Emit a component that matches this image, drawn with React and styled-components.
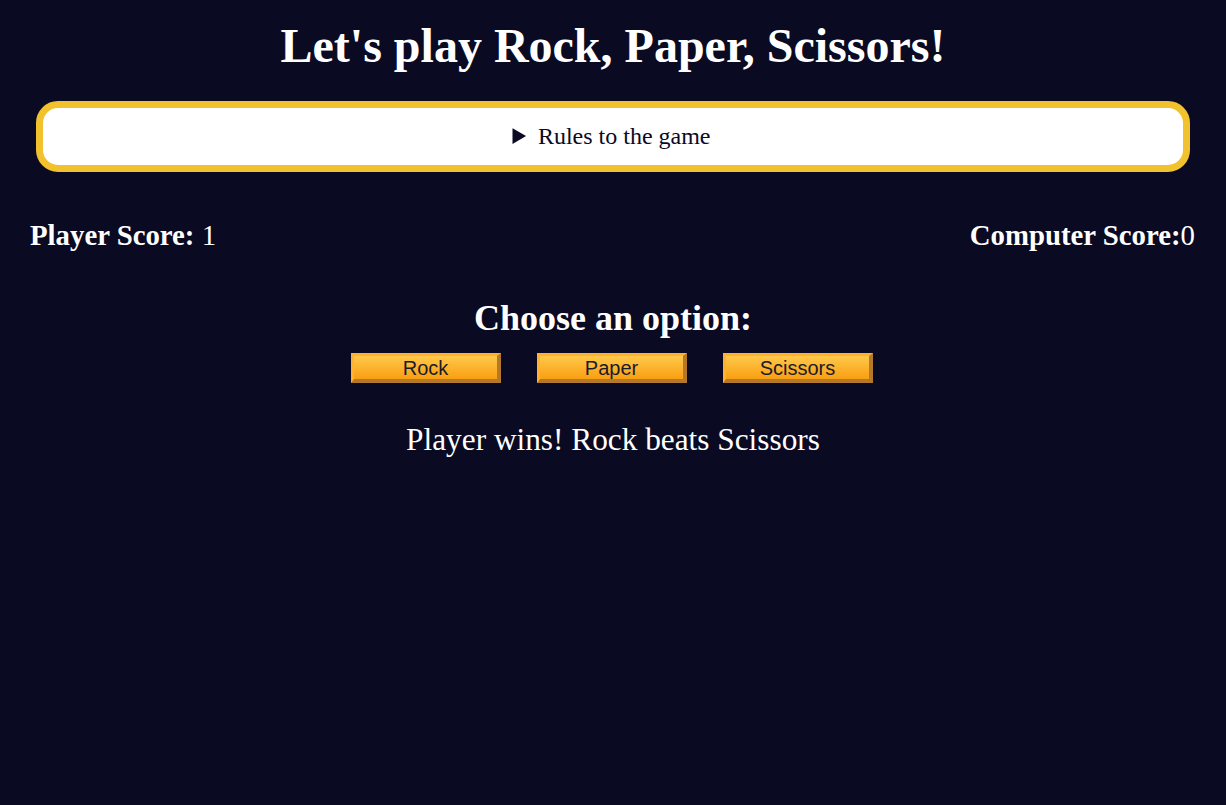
import React from "react";
import styled, { createGlobalStyle } from "styled-components";

const Global = createGlobalStyle`
  html, body { margin: 0; padding: 0; background: #0a0a22; }
  body { font-family: "Liberation Serif", "Times New Roman", serif; color: #ffffff; }
`;

const Page = styled.div`
  display: flex;
  flex-direction: column;
  align-items: stretch;
  min-height: 805px;
`;

const Title = styled.h1`
  margin: 18px 0 0;
  font-size: 48px;
  line-height: 56px;
  font-weight: bold;
  text-align: center;
`;

const Rules = styled.details`
  margin: 27px 36px 0;
  background: #ffffff;
  border: 7px solid #f2c12e;
  border-radius: 22px;
  color: #0a0a22;
`;

const Summary = styled.summary`
  font-size: 24px;
  line-height: 57px;
  text-align: center;
  cursor: pointer;
  padding-right: 3px;
`;

const Scores = styled.div`
  margin-top: 47px;
  padding: 0 31px 0 30px;
  display: flex;
  justify-content: space-between;
  font-size: 28.8px;
  line-height: 32px;
`;

const Label = styled.b`
  font-weight: bold;
`;

const Choose = styled.h2`
  margin: 47px 0 0;
  font-size: 36px;
  line-height: 40px;
  text-align: center;
`;

const Buttons = styled.div`
  margin-top: 15px;
  padding-right: 2px;
  display: flex;
  justify-content: center;
  gap: 36px;
`;

const Button = styled.button`
  box-sizing: border-box;
  width: 150px;
  height: 30px;
  padding: 0;
  border-style: solid;
  border-width: 3px 4px 4px 3px;
  border-color: #ffb22f #b3782a #b3782a #ffb22f;
  background: linear-gradient(#ffc84a, #f99f12);
  color: #1b1b2b;
  font-family: "Liberation Sans", Arial, sans-serif;
  font-size: 20px;
  line-height: 22px;
  cursor: pointer;
`;

const Result = styled.p`
  margin: 40px 0 0;
  font-size: 31.3px;
  line-height: 34px;
  text-align: center;
`;

export default function App() {
  return (
    <>
      <Global />
      <Page>
        <Title>Let's play Rock, Paper, Scissors!</Title>
        <Rules>
          <Summary>Rules to the game</Summary>
        </Rules>
        <Scores>
          <span>
            <Label>Player Score:</Label> 1
          </span>
          <span>
            <Label>Computer Score:</Label>0
          </span>
        </Scores>
        <Choose>Choose an option:</Choose>
        <Buttons>
          <Button>Rock</Button>
          <Button>Paper</Button>
          <Button>Scissors</Button>
        </Buttons>
        <Result>Player wins! Rock beats Scissors</Result>
      </Page>
    </>
  );
}
